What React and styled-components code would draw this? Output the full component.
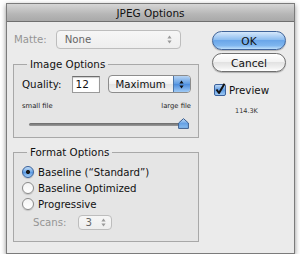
import React, { useState } from 'react';
import styled, { createGlobalStyle } from 'styled-components';

const GlobalStyle = createGlobalStyle`
  html, body {
    margin: 0;
    padding: 0;
    background: #ffffff;
  }
  body {
    font-family: "DejaVu Sans", "Liberation Sans", sans-serif;
    font-size: 10.2px;
    color: #111;
  }
`;

const Page = styled.div`
  padding: 3px 0 0 6px;
`;

const Window = styled.div`
  width: 287px;
  height: 249px;
  border: 1px solid #7b7b7b;
  background: #ebebeb;
  box-shadow: 0 2px 5px rgba(0, 0, 0, 0.45);
  display: flex;
  flex-direction: column;
`;

const TitleBar = styled.div`
  height: 17px;
  flex-shrink: 0;
  display: flex;
  align-items: center;
  justify-content: center;
  font-size: 10.5px;
  color: #111;
  background: linear-gradient(#d6d6d6, #b6b6b6 60%, #a9a9a9);
  border-bottom: 1px solid #6f6f6f;
`;

const Body = styled.div`
  display: grid;
  grid-template-columns: 186px 74px;
  column-gap: 13px;
  padding: 8px 0 0 6px;
`;

const LeftColumn = styled.div`
  display: flex;
  flex-direction: column;
`;

const RightColumn = styled.div`
  display: flex;
  flex-direction: column;
  padding-top: 1px;
`;

const Row = styled.div`
  display: flex;
  align-items: center;
  gap: ${({ gap }) => gap || 0}px;
  padding-left: ${({ indent }) => indent || 0}px;
  margin-top: ${({ top }) => top || 0}px;
  height: ${({ h }) => h || 18}px;
`;

const Label = styled.span`
  color: ${({ disabled }) => (disabled ? '#959595' : '#111')};
  font-size: ${({ size }) => size || 10.2}px;
  white-space: nowrap;
`;

const PopUp = styled.div`
  box-sizing: border-box;
  width: ${({ w }) => w}px;
  height: ${({ h }) => h || 19}px;
  margin-left: ${({ shift }) => shift || 0}px;
  border: 1px solid ${({ disabled }) => (disabled ? '#bdbdbd' : '#8c8c8c')};
  border-radius: 4px;
  background: ${({ disabled }) =>
    disabled
      ? 'linear-gradient(#f6f6f6, #eeeeee)'
      : 'linear-gradient(#ffffff, #f1f1f1 50%, #e3e3e3 51%, #f4f4f4)'};
  display: flex;
  align-items: center;
  padding-left: ${({ pad }) => pad || 8}px;
  color: ${({ disabled }) => (disabled ? '#666' : '#111')};
  overflow: hidden;
`;

const Stepper = styled.div`
  margin-left: auto;
  width: ${({ w }) => w || 16}px;
  align-self: stretch;
  display: flex;
  align-items: center;
  justify-content: center;
  background: ${({ blue }) =>
    blue ? 'linear-gradient(#b6d3f3, #5d9be2 50%, #4a8bdc 51%, #9fcaf5)' : 'transparent'};
  border-left: ${({ blue }) => (blue ? '1px solid #4d76a8' : 'none')};
`;

const Arrows = ({ color }) => (
  <svg width="5" height="9" viewBox="0 0 5 9">
    <path d="M2.5 0.5 L4.6 3.4 L0.4 3.4 Z" fill={color} />
    <path d="M2.5 8.5 L4.6 5.6 L0.4 5.6 Z" fill={color} />
  </svg>
);

const Group = styled.fieldset`
  margin: ${({ top }) => top}px 0 0 0;
  padding: ${({ pt }) => pt || 0}px 6px 0 8px;
  border: 1px solid #a8a8a8;
  background: #e5e5e5;
  height: ${({ h }) => h}px;
  box-sizing: border-box;
`;

const Legend = styled.legend`
  padding: 0 3px;
  margin-left: 5px;
  line-height: 14px;
  font-size: 10.3px;
  color: #111;
`;

const TextField = styled.div`
  box-sizing: border-box;
  width: 28px;
  height: 17px;
  background: #fff;
  border: 1px solid #9a9a9a;
  border-top-color: #6e6e6e;
  box-shadow: inset 0 1px 1px rgba(0, 0, 0, 0.2);
  display: flex;
  align-items: center;
  padding-left: 3px;
  font-size: 10.5px;
`;

const ScaleLabels = styled.div`
  display: flex;
  justify-content: space-between;
  font-size: 6.8px;
  color: #222;
  margin-top: 9px;
  padding-right: 1px;
`;

const Slider = styled.div`
  position: relative;
  height: 12px;
  margin: 9px 0 0 7px;
  width: 160px;
`;

const Track = styled.div`
  position: absolute;
  left: 0;
  right: 4px;
  top: 4px;
  height: 3px;
  border-radius: 2px;
  background: linear-gradient(#6a6a6a, #9a9a9a);
`;

const Thumb = styled.svg`
  position: absolute;
  right: 0;
  top: -1px;
`;

const RadioList = styled.div`
  display: flex;
  flex-direction: column;
  gap: 4px;
  margin-top: 4px;
`;

const RadioRow = styled.label`
  display: flex;
  align-items: center;
  gap: 4px;
  height: 12px;
  font-size: 10.2px;
`;

const RadioDot = styled.span`
  width: 12px;
  height: 12px;
  box-sizing: border-box;
  border-radius: 50%;
  border: 1px solid ${({ on }) => (on ? '#39619a' : '#8a8a8a')};
  background: ${({ on }) =>
    on
      ? 'radial-gradient(circle at 50% 50%, #1b1b1b 0 1.8px, transparent 2.3px), linear-gradient(#c4ddf7, #6aa5e6 50%, #5393df 51%, #a6d0f7)'
      : 'linear-gradient(#f4f4f4, #ffffff)'};
  box-shadow: 0 1px 1px rgba(0, 0, 0, 0.15);
`;

const AquaButton = styled.div`
  box-sizing: border-box;
  height: 19px;
  margin-bottom: 3px;
  border-radius: 10px;
  display: flex;
  align-items: center;
  justify-content: center;
  font-size: 10.6px;
  color: #111;
  border: 1px solid ${({ primary }) => (primary ? '#40649a' : '#6f6f6f')};
  background: ${({ primary }) =>
    primary
      ? 'linear-gradient(#d6e8fb, #8dbdf0 45%, #6aa6e9 50%, #7fb6ef 80%, #bfe0fb)'
      : 'linear-gradient(#ffffff, #f3f3f3 45%, #e2e2e2 50%, #f0f0f0 80%, #ffffff)'};
  box-shadow: 0 1px 1px rgba(0, 0, 0, 0.25);
`;

const CheckRow = styled.div`
  display: flex;
  align-items: center;
  gap: 3px;
  margin: 8px 0 0 2px;
  font-size: 10.3px;
`;

const FileSize = styled.div`
  font-size: 6.5px;
  color: #333;
  margin: 11px 0 0 23px;
`;

const CheckBox = () => (
  <svg width="12" height="13" viewBox="0 0 12 13">
    <defs>
      <linearGradient id="cb" x1="0" y1="0" x2="0" y2="1">
        <stop offset="0" stopColor="#c6def7" />
        <stop offset="0.5" stopColor="#5d9ae2" />
        <stop offset="1" stopColor="#a2cdf6" />
      </linearGradient>
    </defs>
    <rect x="0.5" y="1.5" width="11" height="11" rx="1.5" fill="url(#cb)" stroke="#3b609a" />
    <path d="M2.5 6.5 L5 10 L10.5 0.8" fill="none" stroke="#111" strokeWidth="2" strokeLinejoin="round" />
  </svg>
);

const App = () => {
  const [format, setFormat] = useState('baseline');
  const [preview, setPreview] = useState(true);

  const formats = [
    { id: 'baseline', label: 'Baseline (\u201CStandard\u201D)' },
    { id: 'optimized', label: 'Baseline Optimized' },
    { id: 'progressive', label: 'Progressive' },
  ];

  return (
    <Page>
      <GlobalStyle />
      <Window>
        <TitleBar>JPEG Options</TitleBar>
        <Body>
          <LeftColumn>
            <Row gap={9} h={19} indent={1}>
              <Label disabled>Matte:</Label>
              <PopUp w={125} disabled>
                None
                <Stepper w={20}>
                  <Arrows color="#9a9a9a" />
                </Stepper>
              </PopUp>
            </Row>

            <Group top={8} h={81} pt={4}>
              <Legend>Image Options</Legend>
              <Row gap={10} h={18}>
                <Label size={10.3}>Quality:</Label>
                <TextField>12</TextField>
                <PopUp w={83} h={18} pad={7} shift={-2}>
                  Maximum
                  <Stepper blue>
                    <Arrows color="#111" />
                  </Stepper>
                </PopUp>
              </Row>
              <ScaleLabels>
                <span>small file</span>
                <span>large file</span>
              </ScaleLabels>
              <Slider>
                <Track />
                <Thumb width="11" height="11" viewBox="0 0 11 11">
                  <defs>
                    <linearGradient id="th" x1="0" y1="0" x2="0" y2="1">
                      <stop offset="0" stopColor="#c9e0f8" />
                      <stop offset="0.5" stopColor="#67a2e5" />
                      <stop offset="1" stopColor="#8cbff2" />
                    </linearGradient>
                  </defs>
                  <path d="M5.5 0.6 L10.4 5 L10.4 10.4 L0.6 10.4 L0.6 5 Z" fill="url(#th)" stroke="#3d5f8f" />
                </Thumb>
              </Slider>
            </Group>

            <Group top={7} h={97} pt={3}>
              <Legend>Format Options</Legend>
              <RadioList>
                {formats.map((f) => (
                  <RadioRow key={f.id} onClick={() => setFormat(f.id)}>
                    <RadioDot on={format === f.id ? 1 : 0} />
                    {f.label}
                  </RadioRow>
                ))}
              </RadioList>
              <Row gap={11} h={15} indent={11} top={5}>
                <Label disabled>Scans:</Label>
                <PopUp w={34} h={15} pad={7} disabled>
                  3
                  <Stepper w={14}>
                    <Arrows color="#9a9a9a" />
                  </Stepper>
                </PopUp>
              </Row>
            </Group>
          </LeftColumn>

          <RightColumn>
            <AquaButton primary>OK</AquaButton>
            <AquaButton>Cancel</AquaButton>
            <CheckRow onClick={() => setPreview(!preview)}>
              <CheckBox />
              Preview
            </CheckRow>
            <FileSize>114.3K</FileSize>
          </RightColumn>
        </Body>
      </Window>
    </Page>
  );
};

export default App;
